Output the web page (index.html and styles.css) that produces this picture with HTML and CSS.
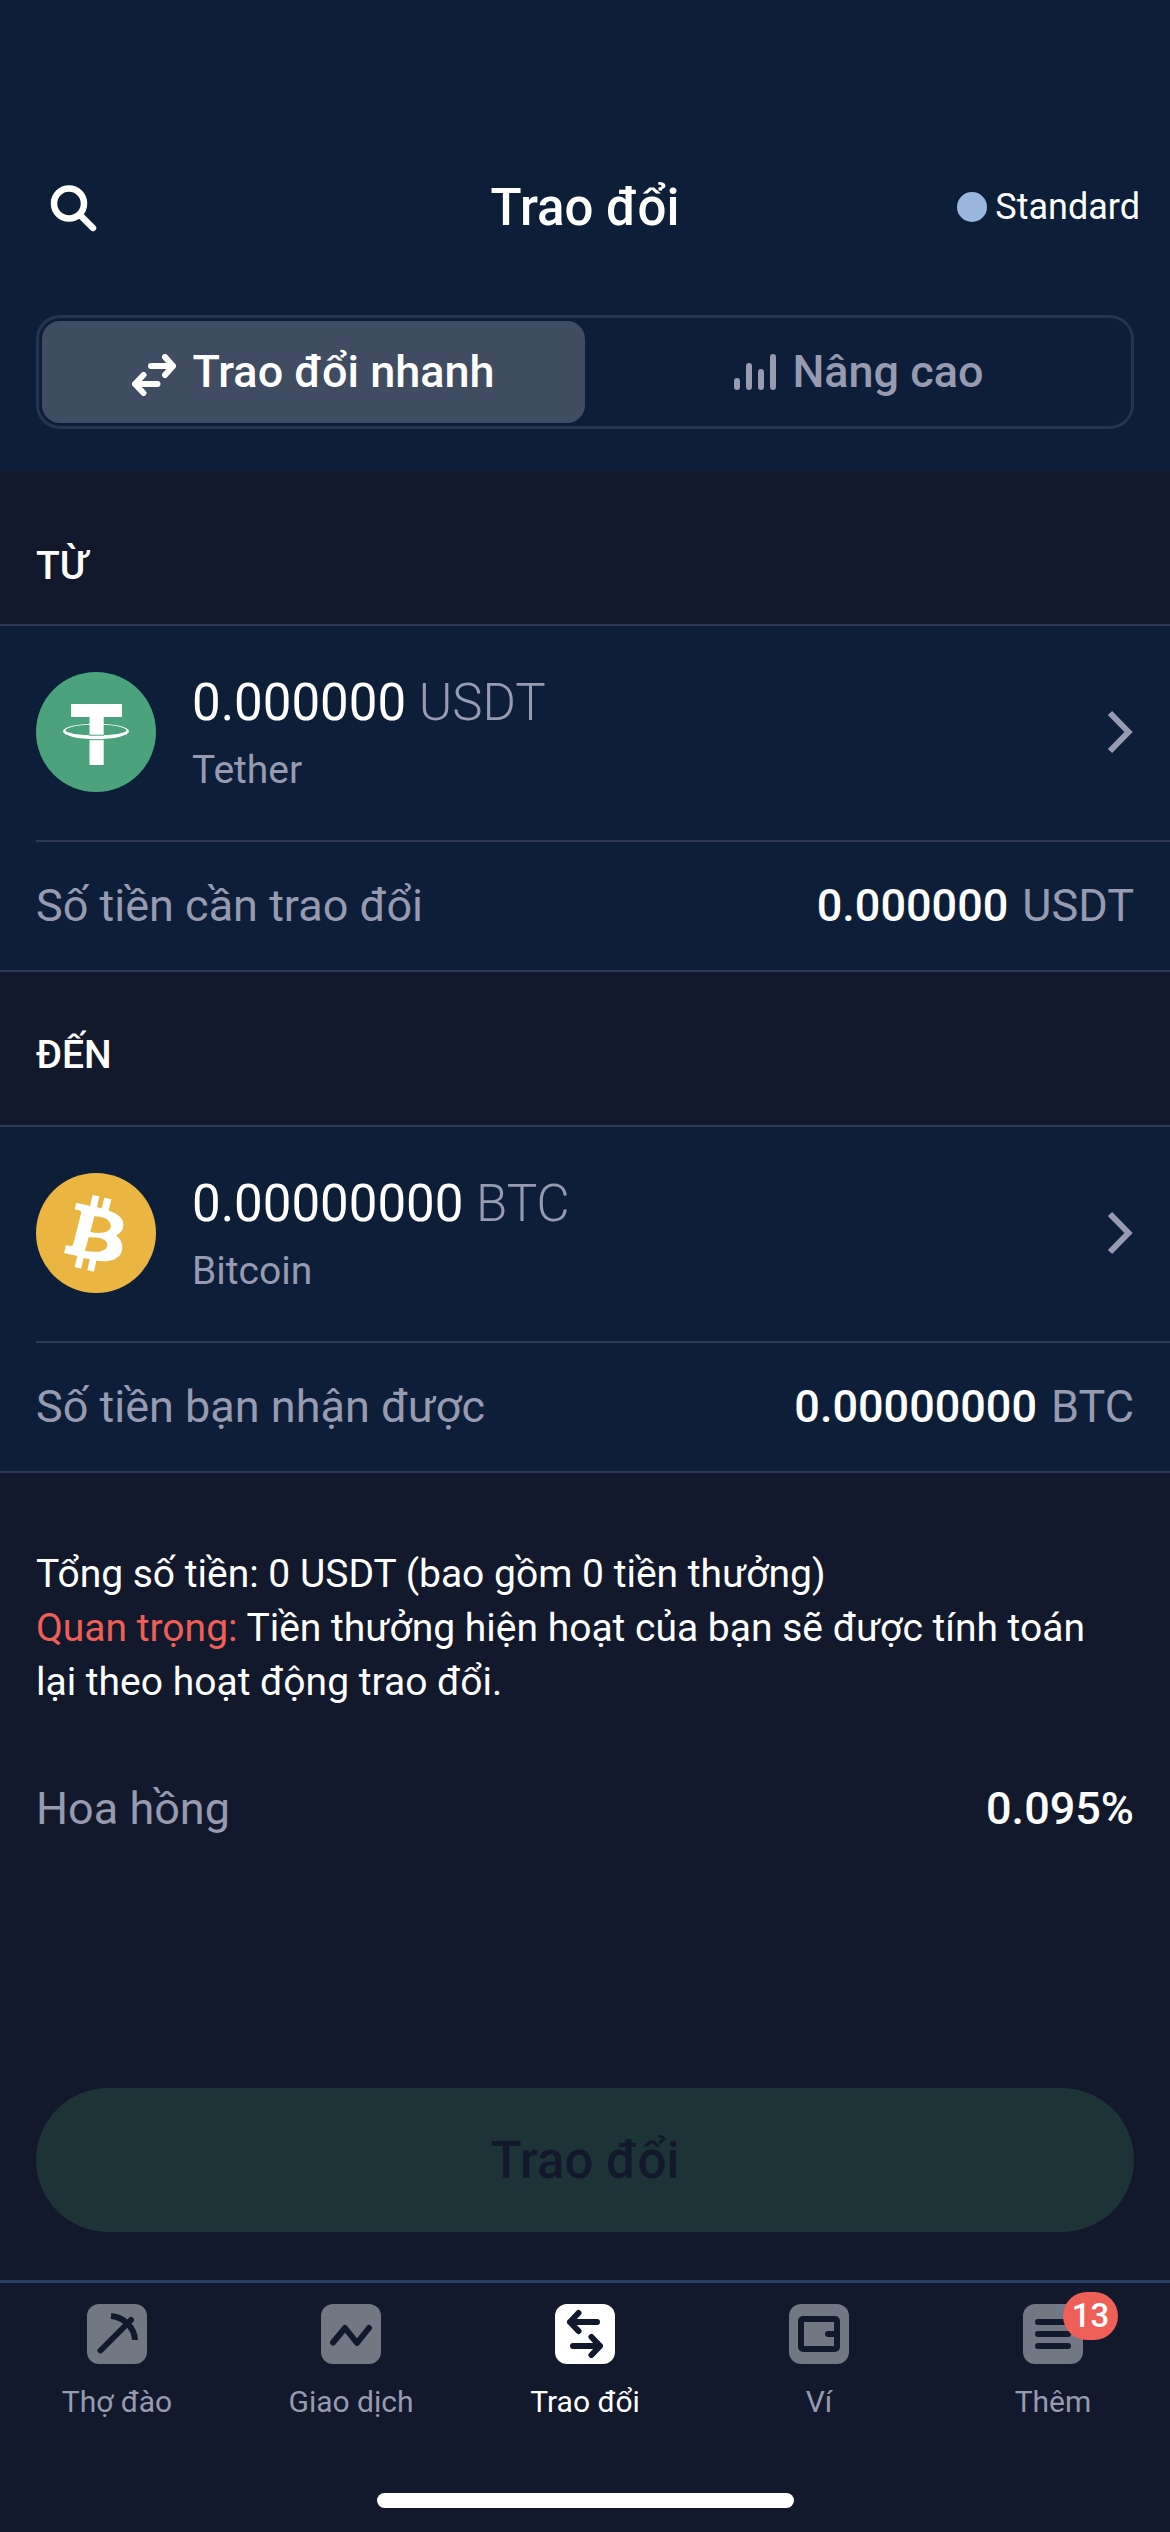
FILE: index.html
```html
<!DOCTYPE html>
<html lang="vi">
<head>
    <meta charset="UTF-8">
    <meta name="viewport" content="width=device-width, initial-scale=1.0">
    <title>Trao đổi</title>
    <link rel="stylesheet" href="styles.css">
</head>
<body>

    <div class="app">

        <header class="header">
            <div class="topbar">
                <svg class="search" viewBox="0 0 50 50">
                    <circle cx="21" cy="21.500" r="15"/>
                    <path d="M32 33L45 46"/>
                </svg>
                <h1 class="title">Trao đổi</h1>
                <div class="status"><span class="dot"></span>Standard</div>
            </div>

            <div class="switch">
                <div class="switch-item active">
                    <svg class="icon-swap" viewBox="0 0 44 42">
                        <path d="M19 12H41M33 3L41 12L33 21M25.500 30H3M11.500 21L3 30L11.500 39"/>
                    </svg>
                    <span>Trao đổi nhanh</span>
                </div>
                <div class="switch-item">
                    <svg class="icon-bars" viewBox="0 0 42 36">
                        <path d="M3 27V33M15 12V33M27 18V33M39 3V33"/>
                    </svg>
                    <span>Nâng cao</span>
                </div>
            </div>
        </header>

        <h2 class="section-title">TỪ</h2>
        <div class="card">
            <div class="coin">
                <svg class="coin-icon" viewBox="0 0 120 120">
                    <circle cx="60" cy="60" r="60" fill="#4ba27c"/>
                    <path fill="#fff" d="M35 32H86V45H67.700V93H53.500V45H35Z"/>
                    <path fill="#fff" fill-rule="evenodd" d="M27 59.300A33 7.700 0 0 1 93 59.300A33 7.900 0 0 1 27 59.300ZM29.500 58.500A30.500 4.800 0 0 0 90.500 58.500A30.500 5.900 0 0 0 29.500 58.500Z"/>
                    <path stroke="#4ba27c" stroke-width="1" d="M53 63.200H68M53 67.700H68"/>
                </svg>
                <div class="coin-text">
                    <div class="amount">0.000000 <span class="unit">USDT</span></div>
                    <div class="coin-name">Tether</div>
                </div>
                <svg class="chevron" viewBox="0 0 28 44"><path d="M4 3L22.500 22L4 41"/></svg>
            </div>
            <div class="row">
                <span class="label">Số tiền cần trao đổi</span>
                <span class="value">0.000000<span class="unit">USDT</span></span>
            </div>
        </div>

        <h2 class="section-title to">ĐẾN</h2>
        <div class="card">
            <div class="coin">
                <svg class="coin-icon" viewBox="18 24 360 360">
                    <circle cx="198" cy="204" r="180" fill="#eab540"/>
                    <path fill="#fff" fill-rule="evenodd" d="M139 113L180 123L188 90L208 94L201 127L215 130L223 98L244 103L236 137C265 146 280 160 280 178C280 194 273 205 258 211C271 221 277 233 277 248C277 274 254 289 218 289L199 287L192 320L172 316L179 283L161 279L153 311L134 306L142 273L102 264L108 240L120 243Q128 244 130 237L153 145Q155 139 148 136L134 133ZM193 154L181 201C214 208 241 203 242 184C243 164 222 155 193 154ZM176 217L165 257C203 265 231 259 232 240C233 224 210 214 176 217Z"/>
                </svg>
                <div class="coin-text">
                    <div class="amount">0.00000000 <span class="unit">BTC</span></div>
                    <div class="coin-name">Bitcoin</div>
                </div>
                <svg class="chevron" viewBox="0 0 28 44"><path d="M4 3L22.500 22L4 41"/></svg>
            </div>
            <div class="row">
                <span class="label">Số tiền bạn nhận được</span>
                <span class="value">0.00000000<span class="unit">BTC</span></span>
            </div>
        </div>

        <div class="note">
            Tổng số tiền: 0 USDT (bao gồm 0 tiền thưởng)<br>
            <span class="important">Quan trọng:</span> Tiền thưởng hiện hoạt của bạn sẽ được tính toán lại theo hoạt động trao đổi.
        </div>

        <div class="fee">
            <span class="label">Hoa hồng</span>
            <span class="value">0.095%</span>
        </div>

        <button class="btn" disabled>Trao đổi</button>

        <nav class="tabbar">
            <div class="tab">
                <svg class="tab-icon" viewBox="0 0 60 60">
                    <path d="M13.500 46.500L44 16" stroke-linecap="round"/>
                    <path d="M24 12C38 13.500 47.500 24 48 36"/>
                </svg>
                Thợ đào
            </div>
            <div class="tab">
                <svg class="tab-icon" viewBox="0 0 60 60">
                    <path d="M12 38.500L24 24L36 39L48 24" stroke-linecap="round" stroke-linejoin="round"/>
                </svg>
                Giao dịch
            </div>
            <div class="tab active">
                <svg class="tab-icon" viewBox="0 0 60 60">
                    <path d="M42 18H15M23.500 9L15 18L23.500 27M18 42H45M36.500 33L45 42L36.500 51" stroke-linecap="round" stroke-linejoin="round"/>
                </svg>
                Trao đổi
            </div>
            <div class="tab">
                <svg class="tab-icon" viewBox="0 0 60 60">
                    <rect x="12" y="15" width="36" height="30" rx="2"/>
                    <path d="M39 30H46" stroke-linecap="round"/>
                </svg>
                Ví
            </div>
            <div class="tab">
                <svg class="tab-icon" viewBox="0 0 60 60">
                    <path d="M15 18H45M15 30H45M15 42H45" stroke-linecap="round"/>
                </svg>
                Thêm
                <span class="badge">13</span>
            </div>
        </nav>

        <div class="home-bar"></div>
    </div>

</body>
</html>
```
FILE: styles.css
```css
* {
    box-sizing: border-box;
}

body {
    margin: 0;
    background: #12192c;
    color: #fff;
    font-family: Roboto, sans-serif;
    font-size: 45px;
}

.app {
    display: flex;
    flex-direction: column;
    width: 1170px;
    height: 2532px;
}

/* header */
.header {
    height: 471px;
    padding: 159px 36px 0;
    background: #0d1f38;
}

.topbar {
    display: grid;
    grid-template-columns: 1fr auto 1fr;
    align-items: center;
    height: 96px;
    padding-left: 12px;
}

.search {
    width: 50px;
    height: 50px;
    fill: none;
    stroke: #fff;
    stroke-width: 6.500;
    stroke-linecap: round;
}

.title {
    margin: 0 12px 0 0;
    font-size: 51px;
    font-weight: 500;
}

.status {
    display: flex;
    align-items: center;
    justify-content: flex-end;
    gap: 8px;
    margin-right: -6px;
    font-size: 36px;
}

.dot {
    width: 30px;
    height: 30px;
    border-radius: 50%;
    background: #9ab7de;
}

.switch {
    display: flex;
    height: 114px;
    margin-top: 60px;
    padding: 3px;
    border: 3px solid #24354e;
    border-radius: 24px;
}

.switch-item {
    flex: 1;
    display: flex;
    align-items: center;
    justify-content: center;
    gap: 16px;
    padding-bottom: 2px;
    border-radius: 18px;
    color: #969bb0;
    font-weight: 500;
}

.switch-item.active {
    background: #3f4c61;
    color: #fff;
}

.icon-swap,
.icon-bars {
    fill: none;
    stroke: currentColor;
    stroke-width: 6;
    stroke-linecap: round;
    stroke-linejoin: round;
}

.icon-swap {
    width: 44px;
    height: 42px;
    margin-top: 8px;
}

.icon-bars {
    width: 42px;
    height: 36px;
    margin: 2px 0 0 5px;
}

/* from / to cards */
.section-title {
    margin: 0;
    padding: 68px 36px 31px;
    font-size: 39px;
    font-weight: 500;
    line-height: 54px;
}

.section-title.to {
    padding: 56px 36px 43px;
}

.card {
    padding-left: 36px;
    background: #0d1f38;
    border-top: 2px solid #2c3b53;
    border-bottom: 2px solid #2c3b53;
}

.coin {
    display: flex;
    height: 216px;
    padding: 46px 36px 0 0;
    border-bottom: 2px solid #2c3b53;
}

.coin-icon {
    width: 120px;
    height: 120px;
}

.coin-text {
    flex: 1;
    margin-left: 36px;
}

.amount {
    padding-top: 1px;
    font-size: 51px;
    line-height: 60px;
}

.amount .unit {
    font-weight: 300;
}

.coin-name {
    margin-top: 13px;
    font-size: 39px;
    line-height: 48px;
}

.coin-name,
.label,
.unit {
    color: #969bb0;
}

.chevron {
    width: 28px;
    height: 44px;
    margin-top: 38px;
    fill: none;
    stroke: #969bb0;
    stroke-width: 6;
}

.row,
.fee {
    display: flex;
    align-items: center;
    justify-content: space-between;
    padding-right: 36px;
}

.row {
    height: 128px;
    padding-bottom: 1px;
}

.value {
    font-weight: 500;
}

.value .unit {
    margin-left: 14px;
    font-weight: 400;
}

.note {
    margin: 74px 36px 0;
    font-size: 39px;
    line-height: 54px;
}

.important {
    color: #ee5f57;
}

.fee {
    height: 60px;
    margin-top: 69px;
    padding-left: 36px;
}

.btn {
    height: 144px;
    margin: auto 36px 48px;
    border: none;
    border-radius: 72px;
    background: #1c3338;
    color: #12192c;
    font-family: inherit;
    font-size: 51px;
    font-weight: 500;
}

/* bottom tabs */
.tabbar {
    display: flex;
    height: 213px;
    padding-top: 21px;
    border-top: 3px solid #2a3f63;
}

.tab {
    position: relative;
    flex: 1;
    display: flex;
    flex-direction: column;
    align-items: center;
    gap: 20px;
    color: #969bb0;
    font-size: 30px;
    line-height: 36px;
}

.tab.active {
    color: #fff;
}

.tab-icon {
    width: 60px;
    height: 60px;
    border-radius: 12px;
    background: #727784;
    fill: none;
    stroke: #12192c;
    stroke-width: 6;
}

.tab.active .tab-icon {
    background: #fff;
}

.badge {
    position: absolute;
    top: -12px;
    left: 127px;
    width: 55px;
    height: 48px;
    border-radius: 24px;
    background: #ee5f57;
    color: #fff;
    font-size: 33px;
    font-weight: 500;
    line-height: 48px;
    text-align: center;
}

.home-bar {
    width: 417px;
    height: 15px;
    margin: 0 auto 24px;
    border-radius: 8px;
    background: #fff;
}
```
